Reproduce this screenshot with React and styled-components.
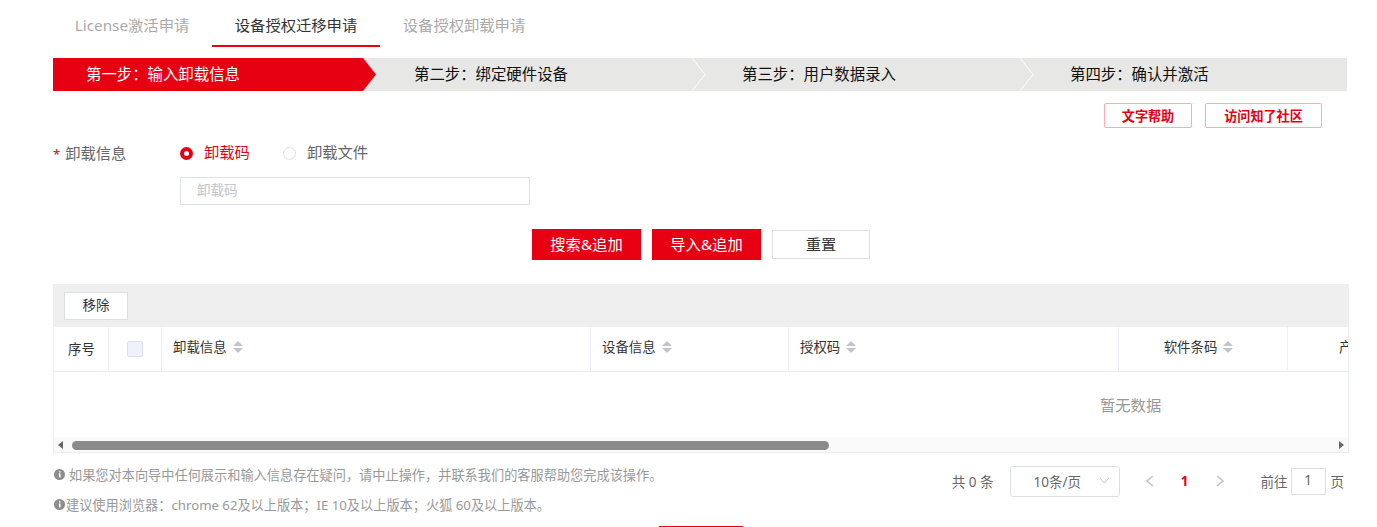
import styled, { createGlobalStyle } from 'styled-components';

const RED = '#e60012';
const LINE = '#ebeef5';

const GlobalStyle = createGlobalStyle`
  html, body {
    margin: 0;
    padding: 0;
    background: #fff;
    overflow: hidden;
  }
  * {
    box-sizing: border-box;
  }
`;

const Page = styled.div`
  width: 1377px;
  height: 527px;
  overflow: hidden;
  padding-left: 53px;
  font-family: 'Noto Sans', 'Noto Sans CJK SC', sans-serif;
  font-size: 15.3px;
  color: #333;
`;

const Tabs = styled.div`
  display: flex;
  height: 47px;
  margin-left: -1px;
  margin-bottom: 11px;
`;

const Tab = styled.div`
  width: ${props => props.width}px;
  height: 47px;
  line-height: 50px;
  text-align: center;
  color: ${props => (props.active ? '#333' : '#aaa')};
  border-bottom: 2px solid ${props => (props.active ? RED : 'transparent')};
`;

const Steps = styled.div`
  display: flex;
  width: 1294px;
  height: 33px;
  background: #e7e7e5;
`;

const Step = styled.div`
  position: relative;
  width: ${props => props.width}px;
  line-height: 33px;
  padding-left: ${props => props.pad}px;
  font-size: 15.4px;
  color: ${props => (props.active ? '#fff' : '#111')};
  background: ${props => (props.active ? RED : 'transparent')};
  border-right: ${props => (props.active ? '1px solid #fff' : '0')};
`;

const StepArrow = styled.svg`
  position: absolute;
  top: 0;
  left: 100%;
  z-index: 1;
`;

const HelpRow = styled.div`
  display: flex;
  justify-content: flex-end;
  gap: 13px;
  width: 1269px;
  margin-top: 12px;
`;

const HelpButton = styled.div`
  width: ${props => props.width}px;
  height: 25px;
  line-height: 25px;
  text-align: center;
  font-size: 13.1px;
  font-weight: 700;
  color: ${RED};
  border: 1px solid #ffa9b0;
  border-radius: 2px;
`;

const FormRow = styled.div`
  display: flex;
  align-items: center;
  height: 24px;
  margin-top: 13px;
`;

const Label = styled.div`
  width: 127px;
  margin-top: -3px;
  color: #666;
  span {
    color: ${RED};
    margin-right: 5px;
    font-size: 13px;
  }
`;

const Radio = styled.div`
  display: flex;
  align-items: center;
  gap: 11px;
  margin-right: 33px;
  line-height: 22px;
  color: ${props => (props.checked ? RED : '#666')};
`;

const RadioDot = styled.i`
  display: block;
  width: 13px;
  height: 13px;
  border-radius: 50%;
  border: ${props => (props.checked ? `4px solid ${RED}` : '1px solid #dcdfe6')};
  background: #fff;
`;

const RadioText = styled.span`
  margin-top: -2px;
`;

const TextInput = styled.div`
  width: 350px;
  height: 28px;
  margin: 12px 0 0 127px;
  padding-left: 16px;
  line-height: 25px;
  font-size: 13.5px;
  color: #c0c4cc;
  border: 1px solid #dcdfe6;
`;

const Actions = styled.div`
  display: flex;
  align-items: center;
  gap: 11px;
  height: 31px;
  margin: 24px 0 24px 479px;
`;

const FillButton = styled.div`
  width: 109px;
  height: 31px;
  line-height: 31px;
  text-align: center;
  color: #fff;
  background: ${RED};
`;

const PlainButton = styled.div`
  width: 98px;
  height: 29px;
  line-height: 27px;
  text-align: center;
  border: 1px solid #dcdfe6;
`;

const Table = styled.div`
  width: 1296px;
  border: 1px solid ${LINE};
  border-top: 0;
  overflow: hidden;
`;

const Toolbar = styled.div`
  height: 43px;
  margin-left: -1px;
  margin-right: -1px;
  padding: 8px 11px;
  background: #efefef;
`;

const SmallButton = styled.div`
  width: 64px;
  height: 28px;
  line-height: 24px;
  text-align: center;
  font-size: 13.5px;
  background: #fff;
  border: 1px solid #dcdfe6;
`;

const HeadRow = styled.div`
  display: flex;
  height: 45px;
  border-bottom: 1px solid ${LINE};
`;

const HeadCell = styled.div`
  display: flex;
  flex: none;
  align-items: center;
  justify-content: ${props => (props.center ? 'center' : 'flex-start')};
  gap: 6px;
  width: ${props => props.width}px;
  padding-left: ${props => props.pad || 0}px;
  padding-right: ${props => (props.center && props.sorted ? 9 : 0)}px;
  padding-bottom: ${props => (props.sorted ? 4 : props.plain ? 2 : 0)}px;
  font-size: 13.4px;
  white-space: nowrap;
  border-right: ${props => (props.last ? '0' : `1px solid ${LINE}`)};
`;

const HeadText = styled.span`
  margin-top: -2px;
`;

const Checkbox = styled.i`
  display: block;
  width: 16px;
  height: 16px;
  background: #edf2fc;
  border: 1px solid #dcdfe6;
  border-radius: 2px;
`;

const Sort = styled.i`
  display: flex;
  flex-direction: column;
  gap: 2px;
  &::before,
  &::after {
    content: '';
    width: 0;
    height: 0;
    border-left: 5px solid transparent;
    border-right: 5px solid transparent;
  }
  &::before {
    border-bottom: 5px solid #c0c4cc;
  }
  &::after {
    border-top: 5px solid #c0c4cc;
  }
`;

const Empty = styled.div`
  height: 65px;
  padding-left: 1046px;
  line-height: 67px;
  color: #999;
`;

const ScrollTrack = styled.div`
  position: relative;
  height: 15px;
  background: #fafafa;
`;

const ScrollThumb = styled.div`
  position: absolute;
  top: 4px;
  left: 18px;
  width: 757px;
  height: 9px;
  border-radius: 5px;
  background: #8a8a8a;
`;

const ScrollArrow = styled.i`
  position: absolute;
  top: 4px;
  ${props => (props.right ? 'right: 4px;' : 'left: 4px;')}
  border-top: 4px solid transparent;
  border-bottom: 4px solid transparent;
  ${props => (props.right ? 'border-left: 5px solid #666;' : 'border-right: 5px solid #666;')}
`;

const Footer = styled.div`
  display: flex;
  justify-content: space-between;
  width: 1291px;
  height: 73px;
  padding-top: 6px;
`;

const Notes = styled.div`
  font-size: 13.2px;
  color: #999;
`;

const Note = styled.div`
  display: flex;
  align-items: center;
  gap: ${props => props.gap}px;
  height: 30px;
  padding-left: 1px;
`;

const Pager = styled.div`
  display: flex;
  align-items: center;
  height: 31px;
  margin-top: 7px;
  font-size: 13.5px;
  color: #666;
`;

const PagerText = styled.span`
  margin-top: -2px;
  margin-left: ${props => props.gap || 0}px;
`;

const PageSize = styled.div`
  display: flex;
  align-items: center;
  justify-content: space-between;
  width: 110px;
  height: 31px;
  margin: 0 26px 0 16px;
  padding: 0 9px 2px 23px;
  border: 1px solid #dcdfe6;
  border-radius: 3px;
`;

const PageChevron = styled.svg`
  margin-top: -2px;
`;

const PageNumber = styled.b`
  width: 20px;
  margin: -2px 21px 0 21px;
  text-align: center;
  font-size: 13.5px;
  color: ${RED};
`;

const PageInput = styled.div`
  width: 35px;
  height: 27px;
  margin: 0 5px 0 3px;
  line-height: 23px;
  text-align: center;
  border: 1px solid #dcdfe6;
`;

const NextButton = styled.div`
  width: 84px;
  height: 30px;
  margin: 0 0 0 606px;
  background: ${RED};
`;

const InfoIcon = () => (
  <svg width="11" height="11" viewBox="0 0 11 11">
    <circle cx="5.5" cy="5.5" r="5.5" fill="#8c8c8c" />
    <path d="M5 2.2h1.6v1.4H5zM4.7 4.6h1.9v4H5.1V5.6h-.4z" fill="#fff" />
  </svg>
);

const Chevron = ({ next }) => (
  <PageChevron width="8" height="12" viewBox="0 0 8 12" fill="none">
    <path d={next ? 'M1 1l6 5-6 5' : 'M7 1L1 6l6 5'} stroke="#c0c4cc" strokeWidth="1.5" />
  </PageChevron>
);

const steps = [
  { text: '第二步：绑定硬件设备', width: 328, pad: 50 },
  { text: '第三步：用户数据录入', width: 328, pad: 50 },
  { text: '第四步：确认并激活', width: 327, pad: 50, last: true },
];

const columns = [
  { title: '设备信息', width: 198, pad: 11 },
  { title: '授权码', width: 330, pad: 11 },
  { title: '软件条码', width: 169, center: true },
];

export default function App() {
  return (
    <>
      <GlobalStyle />
      <Page>
        <Tabs>
          <Tab width={160}>License激活申请</Tab>
          <Tab width={168} active>
            设备授权迁移申请
          </Tab>
          <Tab width={168}>设备授权卸载申请</Tab>
        </Tabs>

        <Steps>
          <Step active width={311} pad={33}>
            第一步：输入卸载信息
            <StepArrow width="14" height="33" viewBox="0 0 14 33">
              <path d="M0 0L13 16.5L0 33Z" fill={RED} />
            </StepArrow>
          </Step>
          {steps.map(step => (
            <Step key={step.text} width={step.width} pad={step.pad}>
              {step.text}
              {!step.last && (
                <StepArrow width="14" height="33" viewBox="0 0 14 33">
                  <path d="M0 0L13 16.5L0 33" fill="none" stroke="#fff" strokeWidth="1" />
                </StepArrow>
              )}
            </Step>
          ))}
        </Steps>

        <HelpRow>
          <HelpButton width={88}>文字帮助</HelpButton>
          <HelpButton width={117}>访问知了社区</HelpButton>
        </HelpRow>

        <FormRow>
          <Label>
            <span>*</span>卸载信息
          </Label>
          <Radio checked>
            <RadioDot checked />
            <RadioText>卸载码</RadioText>
          </Radio>
          <Radio>
            <RadioDot />
            <RadioText>卸载文件</RadioText>
          </Radio>
        </FormRow>
        <TextInput>卸载码</TextInput>

        <Actions>
          <FillButton>搜索&amp;追加</FillButton>
          <FillButton>导入&amp;追加</FillButton>
          <PlainButton>重置</PlainButton>
        </Actions>

        <Table>
          <Toolbar>
            <SmallButton>移除</SmallButton>
          </Toolbar>
          <HeadRow>
            <HeadCell width={55} pad={14} plain>
              序号
            </HeadCell>
            <HeadCell width={53} center>
              <Checkbox />
            </HeadCell>
            <HeadCell width={429} pad={11} sorted>
              <HeadText>卸载信息</HeadText>
              <Sort />
            </HeadCell>
            {columns.map(col => (
              <HeadCell key={col.title} width={col.width} pad={col.pad} center={col.center} sorted>
                <HeadText>{col.title}</HeadText>
                <Sort />
              </HeadCell>
            ))}
            <HeadCell width={168} pad={51} sorted last>
              <HeadText>产品名称</HeadText>
            </HeadCell>
          </HeadRow>
          <Empty>暂无数据</Empty>
          <ScrollTrack>
            <ScrollArrow />
            <ScrollThumb />
            <ScrollArrow right />
          </ScrollTrack>
        </Table>

        <Footer>
          <Notes>
            <Note gap={4}>
              <InfoIcon />
              如果您对本向导中任何展示和输入信息存在疑问，请中止操作，并联系我们的客服帮助您完成该操作。
            </Note>
            <Note gap={1}>
              <InfoIcon />
              建议使用浏览器：chrome 62及以上版本；IE 10及以上版本；火狐 60及以上版本。
            </Note>
          </Notes>
          <Pager>
            <PagerText>共 0 条</PagerText>
            <PageSize>
              10条/页
              <svg width="11" height="7" viewBox="0 0 11 7" fill="none">
                <path d="M1 1l4.5 5L10 1" stroke="#c0c4cc" />
              </svg>
            </PageSize>
            <Chevron />
            <PageNumber>1</PageNumber>
            <Chevron next />
            <PagerText gap={37}>前往</PagerText>
            <PageInput>1</PageInput>
            <PagerText>页</PagerText>
          </Pager>
        </Footer>
        <NextButton />
      </Page>
    </>
  );
}
